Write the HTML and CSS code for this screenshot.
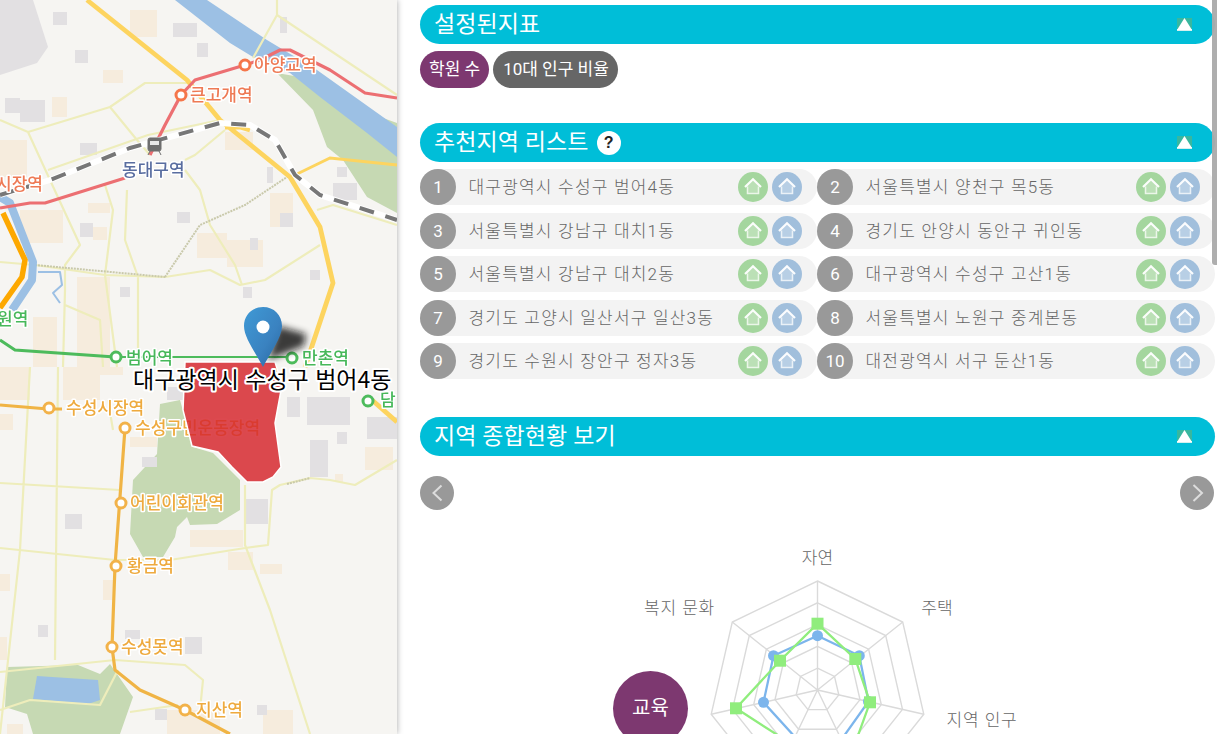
FILE: index.html
```html
<!DOCTYPE html>
<html lang="ko">
<head>
<meta charset="utf-8">
<title>추천지역</title>
<link rel="stylesheet" href="styles.css">
</head>
<body>
<svg class="defs" width="0" height="0" aria-hidden="true">
  <defs>
    <symbol id="home" viewBox="0 0 30 30">
      <path class="home-fill" d="M15 7 7.500 14.500 9 15v7h12v-7l1.500-.5z"/>
      <path class="home-body" d="M9.500 14.500V21.500H20.500V14.500"/>
      <path class="home-roof" d="M7 15 15 7.300 23 15"/>
    </symbol>
    <symbol id="fold" viewBox="0 0 15 13">
      <rect class="fold-bg" width="15" height="13"/>
      <rect class="fold-base" y="11" width="15" height="2"/>
      <path class="fold-tri" d="M7.500 0 15 12H0z"/>
    </symbol>
    <filter id="soft" x="-50%" y="-50%" width="200%" height="200%"><feGaussianBlur stdDeviation="3.500"/></filter>
    <linearGradient id="pinfill" x1="0" y1="0" x2="1" y2="1">
      <stop offset="0" stop-color="#3f9ad6"/><stop offset=".6" stop-color="#3a82c0"/><stop offset="1" stop-color="#27669f"/>
    </linearGradient>
  </defs>
</svg>
<main class="page">
  <section class="map">
    <svg class="map-svg" viewBox="0 0 397 734" width="397" height="734">
      <g class="map-base">
        <rect class="m-land" width="397" height="734"/>
        <path class="m-gray" d="M0 0H33L48 47 37 63 0 75Z"/>
        <path class="m-park" d="M277 73 317 80 333 100 397 123V213L367 197 343 160 327 147 313 110Z"/>
        <path class="m-park" d="M160 404 180 400 193 447 213 453 240 480V510L217 524 190 525 187 517 177 527 175 537 163 557H143L130 534 133 480 157 454Z"/>
        <path class="m-park" d="M7 667 78 665 100 674 110 664 133 697 120 734H33L27 714 5 707Z"/>
        <path class="m-water" d="M175 0H207L267 40 317 70 397 127V157L367 133 320 97 290 73 253 57 230 43Z"/>
        <path class="m-water" d="M37 676 98 680 100 700 88 704 33 699Z"/>
        <path class="m-tan" d="M130 10h27v27h-27zM103 70h20v13h-20zM52 97h15v20h-15zM0 140h27v37h-27zM225 132h28v18h-28zM270 193h23v34h-23zM197 233h30v25h-30zM227 240h36v27h-36zM20 210h43v33h-43zM88 203h22v10h-22zM93 227h14v13h-14zM77 277h33v90h-33zM33 317h24v50h-24zM0 367h30v33h-30zM63 367h37v33h-37zM100 367h23v8h-23zM0 414h13v16h-13zM130 437h27v10h-27zM190 530h53v17h-53zM228 552h25v18h-25zM260 564h22v10h-22zM365 447h28v23h-28zM335 474h8v8h-8zM103 580h10v20h-10zM167 710h53v24h-53zM263 710h30v24h-30zM7 724h16v10h-16zM0 637h7v23h-7zM0 574h10v17h-10z"/>
        <path class="m-gray" d="M75 50h13v13h-13zM53 12h14v13h-14zM197 43h11v14h-11zM173 23h24v14h-24zM5 98h15v15h-15zM20 100h25v22h-25zM80 143h17v12h-17zM80 223h13v14h-13zM177 212h13v11h-13zM250 238h8v12h-8zM280 213h13v14h-13zM267 167h6v16h-6zM120 287h10v10h-10zM310 270h10v10h-10zM243 287h9v11h-9zM337 167h10v10h-10zM333 183h24v17h-24zM280 17h7v16h-7zM167 387h20v13h-20zM142 457h15v10h-15zM245 499h23v25h-23zM65 514h17v15h-17zM38 625h10v12h-10zM125 630h15v9h-15zM185 637h17v17h-17zM155 709h12v11h-12zM257 705h10v10h-10zM367 417h30v22h-30zM310 440h18v37h-18zM307 397h43v28h-43zM287 397h13v20h-13zM337 432h10v12h-10z"/>
        <path class="m-road" d="M0 120 28 132 110 107 145 83H187M110 107 137 140 150 155M48 170 148 135 220 120M28 132 50 180 80 245 65 265V290L63 367M105 185 113 210 105 275 117 367M127 190 125 240 138 277V367M0 262 35 265 105 275 165 277 210 270 240 285 265 280 320 245M185 170 200 190 210 225 235 265 242 285M65 305 100 320 103 367M277 0V15L397 95M277 15 253 58M225 130 195 155 185 160M317 210 333 205 397 225M30 367 20 550 0 734M58 367 55 660M0 483 120 490M0 548 115 560 170 560 245 548 268 545 272 490 280 485 310 478 330 480 355 485 397 460M245 485V545L270 610 310 734M0 672 115 660 185 665 203 680 200 710M0 710 30 700 100 705 118 670M113 430 108 400M130 712 178 705"/>
        <path class="m-rail" d="M165 277 200 225 245 205 290 175M35 265 165 277M287 484 310 478"/>
        <path class="m-river" d="M0 197 10 203 33 262 32 280 12 310"/>
        <path class="m-water-line" d="M38 272H60L62 285 53 293 60 303"/>
        <path class="m-orange" d="M3 213 25 260 22 277 0 308"/>
        <path class="m-high" d="M87 0 187 80 220 120 290 177 320 227 333 283 305 367M225 127H240L250 130"/>
        <path class="m-high-thin" d="M295 175 330 158 397 165"/>
        <path class="m-high" d="M372 400 397 422"/>
        <path class="m-red" d="M397 98 365 93 330 70 290 50H280L260 60 245 65 195 80 181 95 165 125 150 155M125 178 45 203H30L0 208"/>
        <path class="m-track" d="M0 195 50 180 130 148 220 123 250 125 275 140 295 175 320 195 397 220"/>
        <path class="m-dash" d="M0 195 50 180 130 148 220 123 250 125 275 140 295 175 320 195 397 220"/>
        <path class="m-green" d="M0 340 15 350 115 357"/>
        <path class="m-green-thin" d="M115 357H290"/>
        <path class="m-gold" d="M0 405 48 409H62M125 428 115 566 112 647 115 670 140 690 185 710 230 734"/>
        <circle class="st st-red" cx="245" cy="65" r="5"/>
        <circle class="st st-red" cx="181" cy="95" r="5"/>
        <circle class="st st-green" cx="116" cy="357" r="5"/>
        <circle class="st st-green" cx="292" cy="358" r="5"/>
        <circle class="st st-green" cx="368" cy="401" r="5"/>
        <circle class="st st-gold" cx="49" cy="408" r="5"/>
        <circle class="st st-gold" cx="125" cy="428" r="5"/>
        <circle class="st st-gold" cx="121" cy="503" r="5"/>
        <circle class="st st-gold" cx="116" cy="566" r="5"/>
        <circle class="st st-gold" cx="112" cy="647" r="5"/>
        <circle class="st st-gold" cx="185" cy="710" r="5"/>
        <path class="m-train" d="M150 138h9a2 2 0 0 1 2 2v9a2 2 0 0 1-2 2h-9a2 2 0 0 1-2-2v-9a2 2 0 0 1 2-2zM150 151l-2 4M159 151l2 4"/>
        <path class="m-train-win" d="M150 141h9v4h-9z"/>
        <text class="lb lb-red" x="254" y="71">아양교역</text>
        <text class="lb lb-red" x="190" y="101">큰고개역</text>
        <text class="lb lb-blue" x="122" y="176">동대구역</text>
        <text class="lb lb-red" x="-4" y="190">시장역</text>
        <text class="lb lb-green" x="-3" y="325">원역</text>
        <text class="lb lb-green" x="126" y="364">범어역</text>
        <text class="lb lb-green" x="302" y="364">만촌역</text>
        <text class="lb lb-green" x="380" y="406">담</text>
        <text class="lb lb-gold" x="66" y="414">수성시장역</text>
        <text class="lb lb-gold" x="135" y="434">수성구민운동장역</text>
        <text class="lb lb-gold" x="130" y="509">어린이회관역</text>
        <text class="lb lb-gold" x="127" y="572">황금역</text>
        <text class="lb lb-gold" x="121" y="653">수성못역</text>
        <text class="lb lb-gold" x="196" y="716">지산역</text>
      </g>
      <path class="m-area" d="M185 362H275L282 385 275 423 281 467 273 477 263 482H247L232 467 218 452 192 446 183 410Z"/>
      <path class="pin-shadow" d="M278 326 306 334 304 346 268 360Z" filter="url(#soft)"/>
      <path class="pin" d="M263 307C274 307 282 315 282 326 282 338 270 353 263 367 256 353 244 338 244 326 244 315 252 307 263 307Z"/>
      <circle class="pin-dot" cx="263" cy="327" r="6.500"/>
      <text class="area-name" x="133" y="388">대구광역시 수성구 범어4동</text>
    </svg>
  </section>

  <section class="panel">
    <div class="thumb"></div>

    <header class="bar"><h2 class="bar-title">설정된지표</h2><svg class="fold"><use href="#fold"/></svg></header>
    <div class="chips">
      <span class="chip chip-purple">학원 수</span>
      <span class="chip chip-gray">10대 인구 비율</span>
    </div>

    <header class="bar bar-list"><h2 class="bar-title">추천지역 리스트</h2><span class="help">?</span><svg class="fold"><use href="#fold"/></svg></header>
    <ol class="rank">
      <li class="row"><span class="num">1</span><span class="name">대구광역시 수성구 범어4동</span><svg class="act act-g"><use href="#home"/></svg><svg class="act act-b"><use href="#home"/></svg></li>
      <li class="row"><span class="num">2</span><span class="name">서울특별시 양천구 목5동</span><svg class="act act-g"><use href="#home"/></svg><svg class="act act-b"><use href="#home"/></svg></li>
      <li class="row"><span class="num">3</span><span class="name">서울특별시 강남구 대치1동</span><svg class="act act-g"><use href="#home"/></svg><svg class="act act-b"><use href="#home"/></svg></li>
      <li class="row"><span class="num">4</span><span class="name">경기도 안양시 동안구 귀인동</span><svg class="act act-g"><use href="#home"/></svg><svg class="act act-b"><use href="#home"/></svg></li>
      <li class="row"><span class="num">5</span><span class="name">서울특별시 강남구 대치2동</span><svg class="act act-g"><use href="#home"/></svg><svg class="act act-b"><use href="#home"/></svg></li>
      <li class="row"><span class="num">6</span><span class="name">대구광역시 수성구 고산1동</span><svg class="act act-g"><use href="#home"/></svg><svg class="act act-b"><use href="#home"/></svg></li>
      <li class="row"><span class="num">7</span><span class="name">경기도 고양시 일산서구 일산3동</span><svg class="act act-g"><use href="#home"/></svg><svg class="act act-b"><use href="#home"/></svg></li>
      <li class="row"><span class="num">8</span><span class="name">서울특별시 노원구 중계본동</span><svg class="act act-g"><use href="#home"/></svg><svg class="act act-b"><use href="#home"/></svg></li>
      <li class="row"><span class="num">9</span><span class="name">경기도 수원시 장안구 정자3동</span><svg class="act act-g"><use href="#home"/></svg><svg class="act act-b"><use href="#home"/></svg></li>
      <li class="row"><span class="num">10</span><span class="name">대전광역시 서구 둔산1동</span><svg class="act act-g"><use href="#home"/></svg><svg class="act act-b"><use href="#home"/></svg></li>
    </ol>

    <header class="bar bar-summary"><h2 class="bar-title">지역 종합현황 보기</h2><svg class="fold"><use href="#fold"/></svg></header>
    <nav class="pager">
      <button class="nav-btn" aria-label="이전"><svg viewBox="0 0 34 34" class="chev"><path d="M21.500 9.500 13.500 17 21.500 24.500"/></svg></button>
      <button class="nav-btn" aria-label="다음"><svg viewBox="0 0 34 34" class="chev"><path d="M13.500 9 22 17 13.500 25"/></svg></button>
    </nav>

    <div class="chart">
      <svg class="chart-svg" viewBox="420 510 794 224" width="794" height="224">
        <g transform="translate(817.500 690)">
          <path class="grid" d="M0 0V-109M0 0 85.200-68M0 0 106.300 24.300M0 0 47.300 98.200M0 0-47.300 98.200M0 0-106.300 24.300M0 0-85.200-68"/>
          <polygon class="grid" points="0,-109 85.200,-68 106.300,24.300 47.300,98.200 -47.300,98.200 -106.300,24.300 -85.200,-68"/>
          <polygon class="grid" points="0,-87.200 68.200,-54.400 85,19.400 37.800,78.600 -37.800,78.600 -85,19.400 -68.200,-54.400"/>
          <polygon class="grid" points="0,-65.400 51.100,-40.800 63.800,14.600 28.400,58.900 -28.400,58.900 -63.800,14.600 -51.100,-40.800"/>
          <polygon class="grid" points="0,-43.600 34.100,-27.200 42.500,9.700 18.900,39.300 -18.900,39.300 -42.500,9.700 -34.100,-27.200"/>
          <polygon class="grid" points="0,-21.800 17,-13.600 21.300,4.900 9.500,19.600 -9.500,19.600 -21.300,4.900 -17,-13.600"/>
          <polygon class="s-blue" points="0,-54.300 41.800,-34.300 51,11.500 23.900,49.600 -22.600,46.900 -54,12.300 -44,-34.300"/>
          <g class="d-blue">
            <circle cy="-54.300" r="5.500"/><circle cx="41.800" cy="-34.300" r="5.500"/><circle cx="51" cy="11.500" r="5.500"/><circle cx="-54" cy="12.300" r="5.500"/><circle cx="-44" cy="-34.300" r="5.500"/>
          </g>
          <polygon class="s-green" points="0,-66.300 37.800,-31 52.500,12.300 32.500,67.600 -26,54 -81.500,18.300 -37.500,-29.300"/>
          <g class="d-green">
            <rect x="-6" y="-72.300" width="12" height="12"/><rect x="31.800" y="-37" width="12" height="12"/><rect x="46.500" y="6.300" width="12" height="12"/><rect x="-87.500" y="12.300" width="12" height="12"/><rect x="-43.500" y="-35.300" width="12" height="12"/>
          </g>
        </g>
        <text class="axis" x="817.500" y="564" text-anchor="middle">자연</text>
        <text class="axis" x="937" y="614" text-anchor="middle">주택</text>
        <text class="axis axis-wide" x="679.500" y="614" text-anchor="middle">복지 문화</text>
        <text class="axis axis-wide" x="982" y="726" text-anchor="middle">지역 인구</text>
      </svg>
      <span class="bubble">교육</span>
    </div>
  </section>
</main>
</body>
</html>
```
FILE: styles.css
```css
* { box-sizing: border-box; }
html, body { margin: 0; padding: 0; height: 100%; overflow: hidden; background: #fff; }
body { font-family: Roboto, "Noto Sans CJK KR", sans-serif; color: #666; }
.defs { position: absolute; }
.page { display: flex; height: 734px; width: 1217px; overflow: hidden; }

/* map */
.map { flex: 0 0 397px; height: 734px; position: relative; z-index: 1; box-shadow: 0 0 6px rgba(0,0,0,.35); }
.map-svg { display: block; }
.map-base { filter: blur(.7px); }
.m-land { fill: #f6f5f2; }
.m-gray { fill: #e2e0e2; }
.m-tan { fill: #f6ecdd; }
.m-park { fill: #c6d9b3; }
.m-water { fill: #9cc0e4; }
.m-road { fill: none; stroke: #eeedbb; stroke-width: 2.200; stroke-linejoin: round; }
.m-rail { fill: none; stroke: #c9c9ab; stroke-width: 2; stroke-dasharray: 2 1; }
.m-river { fill: none; stroke: #9cc0e4; stroke-width: 8; stroke-linejoin: round; }
.m-water-line { fill: none; stroke: #9cc0e4; stroke-width: 2; stroke-linejoin: round; }
.m-orange { fill: none; stroke: #fda800; stroke-width: 5.500; }
.m-high { fill: none; stroke: #fdd45f; stroke-width: 4.800; stroke-linejoin: round; }
.m-high-thin { fill: none; stroke: #fdd45f; stroke-width: 3; }
.m-red { fill: none; stroke: #ec6f72; stroke-width: 3.200; stroke-linejoin: round; }
.m-track { fill: none; stroke: #fff; stroke-width: 6; }
.m-dash { fill: none; stroke: #777; stroke-width: 4; stroke-dasharray: 15 12; }
.m-green { fill: none; stroke: #4dbb5c; stroke-width: 3; }
.m-green-thin { fill: none; stroke: #4dbb5c; stroke-width: 1.800; }
.m-gold { fill: none; stroke: #f0b445; stroke-width: 3.200; stroke-linejoin: round; }
.m-train { fill: #6f6f6f; stroke: #6f6f6f; stroke-width: 1; }
.m-train-win { fill: #e8e8e8; }
.st { fill: #fff; stroke-width: 3; }
.st-red { stroke: #f5764a; }
.st-green { stroke: #4dbb5c; }
.st-gold { stroke: #f2b24a; }
.lb { font-family: "Noto Sans CJK KR", sans-serif; font-size: 17px; font-weight: 500; paint-order: stroke; stroke: #fff; stroke-width: 3px; stroke-linejoin: round; }
.lb-red { fill: #ee7a55; }
.lb-blue { fill: #596da0; }
.lb-green { fill: #47b85a; }
.lb-gold { fill: #eeaa3e; }
.m-area { fill: #d5262d; fill-opacity: .84; stroke: #fff; stroke-width: 1.500; }
.pin-shadow { fill: #111; opacity: .8; }
.pin { fill: url(#pinfill); }
.pin-dot { fill: #fff; }
.area-name { font-family: "Noto Sans CJK KR", sans-serif; font-size: 23px; font-weight: 400; fill: #000; paint-order: stroke; stroke: #fff; stroke-width: 4px; stroke-linejoin: round; }

/* panel */
.panel { flex: 1; position: relative; padding: 5px 2px 0 23px; min-width: 0; }
.thumb { position: absolute; top: 0; right: 0; width: 5px; height: 265px; background: #aaa; opacity: .95; border-bottom-left-radius: 3px; z-index: 2; }
.bar { display: flex; align-items: center; height: 39px; padding: 0 23px 0 14px; background: #00bed8; border-radius: 20px; }
.bar-title { margin: 0; font-size: 23px; font-weight: 400; letter-spacing: .1px; color: #fff; line-height: 39px; }
.fold { width: 15px; height: 13px; margin-left: auto; }
.fold-bg { fill: #38b79f; }
.fold-base { fill: #d6f0ee; }
.fold-tri { fill: #fff; }
.help { width: 24px; height: 24px; margin-left: 8px; border-radius: 50%; background: #fff; color: #222; font: 700 16px/24px "Liberation Sans", sans-serif; text-align: center; }

.chips { display: flex; gap: 4px; margin-top: 7px; }
.chip { height: 37px; padding: 0 9px; border-radius: 19px; color: #fff; font-size: 17px; line-height: 37px; }
.chip-purple { background: #7d3870; }
.chip-gray { background: #666; padding: 0 9px 0 10px; }

.bar-list { margin-top: 35px; }
.rank { display: grid; grid-template-columns: 397px 398px; row-gap: 7.500px; margin: 7px 0 0; padding: 0; list-style: none; }
.row { display: flex; align-items: center; height: 36px; padding-right: 15px; background: #f3f3f3; border-radius: 18px; }
.num { flex: 0 0 36px; height: 36px; border-radius: 50%; background: #999; color: #fff; font-size: 17px; line-height: 36px; text-align: center; }
.name { margin: 0 0 3px 12.500px; font-size: 17px; letter-spacing: 1.200px; color: #666; font-weight: 300; white-space: nowrap; }
.act { width: 30px; height: 30px; border-radius: 50%; }
.act-g { margin-left: auto; background: #a4d69e; }
.act-b { margin-left: 4px; background: #a1bfdc; }
.home-fill { fill: rgba(255,255,255,.25); }
.home-body { fill: none; stroke: #fff; stroke-opacity: .7; stroke-width: 1.600; }
.home-roof { fill: none; stroke: #fff; stroke-opacity: .95; stroke-width: 2.200; stroke-linejoin: miter; }

.bar-summary { margin-top: 38px; }
.pager { display: flex; justify-content: space-between; margin: 20px 1px 0 0; }
.nav-btn { width: 34px; height: 34px; padding: 0; border: 0; border-radius: 50%; background: #999; }
.chev { display: block; width: 34px; height: 34px; fill: none; stroke: #ddd; stroke-width: 2; }

.chart { position: relative; height: 224px; }
.chart-svg { display: block; }
.grid { fill: none; stroke: #dadada; stroke-width: 1.400; }
.s-blue { fill: none; stroke: #7cb5ec; stroke-width: 2.300; }
.d-blue { fill: #7cb5ec; }
.s-green { fill: none; stroke: #90ed7d; stroke-width: 2.300; }
.d-green { fill: #90ed7d; }
.axis { font-family: "Noto Sans CJK KR", sans-serif; font-size: 17px; fill: #666; font-weight: 300; }
.axis-wide { letter-spacing: .7px; }
.bubble { position: absolute; left: 193px; top: 161px; width: 75px; height: 75px; border-radius: 50%; background: #7d3870; color: #fff; font-size: 20px; line-height: 75px; text-align: center; }
```
